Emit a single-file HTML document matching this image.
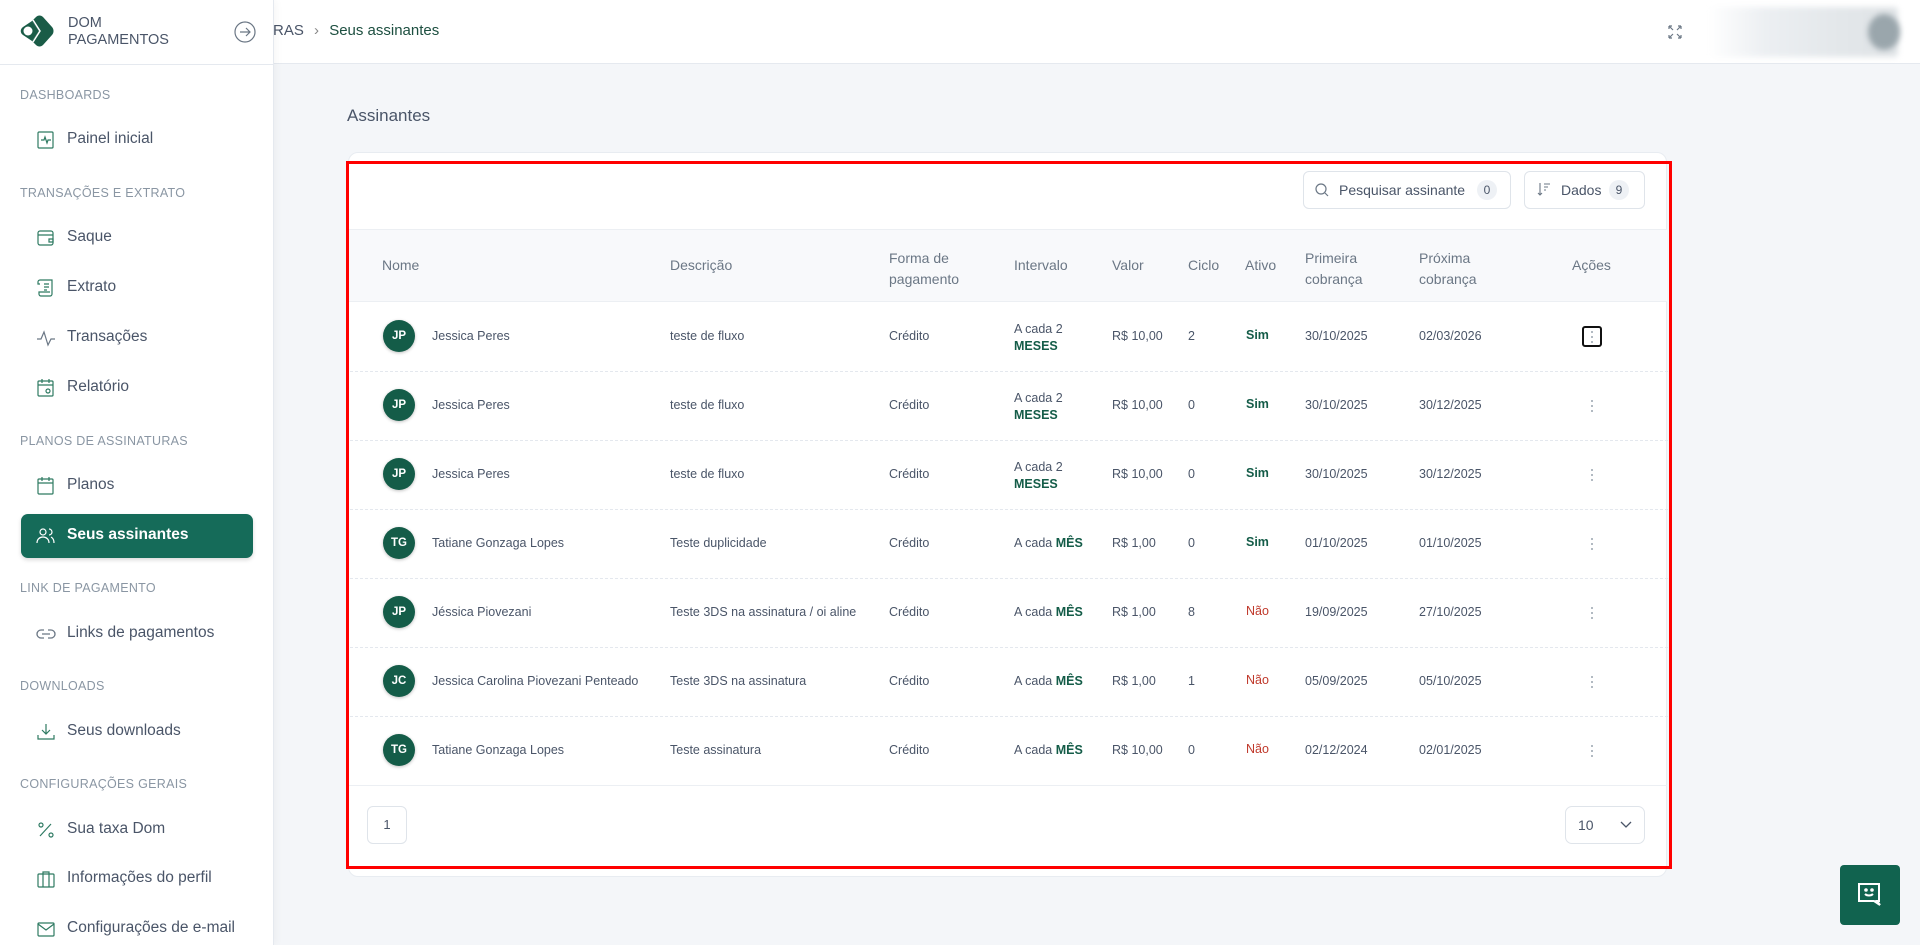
<!DOCTYPE html>
<html><head><meta charset="utf-8"><style>
*{box-sizing:border-box;margin:0;padding:0}
body{width:1920px;height:945px;overflow:hidden;background:#f4f6f9;font-family:"Liberation Sans",sans-serif;color:#4a5568;position:relative}
.a{position:absolute;white-space:nowrap}
.side{position:absolute;left:0;top:0;width:274px;height:945px;background:#fff;border-right:1px solid #e5e9ef;box-shadow:2px 0 8px rgba(0,0,0,.04)}
.sec{position:absolute;left:20px;font-size:12.5px;color:#8a96a3;letter-spacing:.3px}
.it{position:absolute;left:67px;font-size:15.5px;color:#4a5568}
.ic{position:absolute;left:36px;width:20px;height:20px}
.hd{font-size:14px;color:#6b7785}
.td{font-size:12.5px;color:#4a5568}
.av{position:absolute;width:32px;height:32px;border-radius:50%;background:#145c48;color:#fff;font-size:11.5px;font-weight:bold;text-align:center;line-height:32px;box-shadow:0 1px 3px rgba(0,0,0,.25)}
.g{color:#145c48;font-weight:bold}
.r{color:#c0392b}
.dash{position:absolute;left:350px;width:1318px;border-top:1px dashed #e4e8ee}
.dots{position:absolute;width:3px}
.dots i{display:block;width:2px;height:2px;background:#9aa4af;border-radius:50%;margin:3px 0}
</style></head><body>

<!-- header -->
<div class="a" style="left:274px;top:0;width:1646px;height:64px;background:#fff;border-bottom:1px solid #e5e9ef"></div>
<div class="a" style="left:273px;top:22px;font-size:15px;color:#4a5568">RAS <span style="margin:0 6px;color:#888">›</span> <span style="color:#1d4f40">Seus assinantes</span></div>
<svg class="a" style="left:1667px;top:24px" width="16" height="16" viewBox="0 0 16 16" fill="none" stroke="#6b7785" stroke-width="1.2"><path d="M2 2l4 4M2 2v3M2 2h3M14 2l-4 4M14 2v3M14 2h-3M2 14l4-4M2 14v-3M2 14h3M14 14l-4-4M14 14v-3M14 14h-3"/></svg>
<div class="a" style="left:1708px;top:7px;width:190px;height:50px;background:linear-gradient(90deg,#fff 0%,#eceff2 30%,#e3e7ea 70%,#dfe3e6 100%);border-radius:4px;filter:blur(3px)"></div>
<div class="a" style="left:1868px;top:14px;width:32px;height:36px;border-radius:50%;background:#9aa6ac;filter:blur(3px)"></div>

<!-- sidebar -->
<div class="side">
<svg class="a" style="left:20px;top:15px" width="34" height="32" viewBox="0 0 34 32"><path d="M16 2c2-2 5-2 7 0l9 10c2 2 2 6 0 8l-9 10c-2 2-5 2-7 0l-4-4 7-10-7-10z" fill="#1a5c47"/><path d="M12 6l7 10-7 10-9-6c-3-2-3-6 0-8z" fill="#1a5c47"/><circle cx="8" cy="16" r="4.5" fill="#fff"/><path d="M13 5l7 11-7 11" fill="none" stroke="#fff" stroke-width="1.5"/></svg>
<div class="a" style="left:68px;top:15px;font-size:14.5px;color:#4a5568;line-height:17px">DOM<br>PAGAMENTOS</div>
<svg class="a" style="left:234px;top:21px" width="22" height="22" viewBox="0 0 22 22" fill="none" stroke="#6b7785" stroke-width="1.2"><circle cx="11" cy="11" r="10"/><path d="M6 11h10M12 7l4 4-4 4"/></svg>
<div class="a" style="left:0;top:64px;width:274px;border-top:1px solid #e5e9ef"></div>

<div class="sec" style="top:88px">DASHBOARDS</div>
<svg class="ic" style="top:130px" viewBox="0 0 20 20" fill="none" stroke="#2e7a62" stroke-width="1.2"><rect x="2" y="2" width="15" height="16" rx="1"/><path d="M5 10h3l1-3 2 6 1-3h3"/></svg>
<div class="it" style="top:130px">Painel inicial</div>

<div class="sec" style="top:186px">TRANSAÇÕES E EXTRATO</div>
<svg class="ic" style="top:228px" viewBox="0 0 20 20" fill="none" stroke="#2e7a62" stroke-width="1.2"><rect x="2" y="3" width="15" height="14" rx="2"/><path d="M2 7h15M13 11h4v3h-4z"/></svg>
<div class="it" style="top:228px">Saque</div>
<svg class="ic" style="top:278px" viewBox="0 0 20 20" fill="none" stroke="#2e7a62" stroke-width="1.2"><path d="M4 2h12v14a2 2 0 01-2 2H5a2 2 0 01-2-2v-2h11M4 2a2 2 0 00-2 2v2h2M8 6h5M8 9h5M8 12h3"/></svg>
<div class="it" style="top:278px">Extrato</div>
<svg class="ic" style="top:328px" viewBox="0 0 20 20" fill="none" stroke="#6b7785" stroke-width="1.2"><path d="M1 11h4l3-7 4 13 3-6h4"/></svg>
<div class="it" style="top:328px">Transações</div>
<svg class="ic" style="top:378px" viewBox="0 0 20 20" fill="none" stroke="#2e7a62" stroke-width="1.2"><rect x="2" y="3" width="15" height="15" rx="1"/><path d="M2 7h15M6 1v4M13 1v4"/><circle cx="12" cy="13" r="2"/></svg>
<div class="it" style="top:378px">Relatório</div>

<div class="sec" style="top:434px">PLANOS DE ASSINATURAS</div>
<svg class="ic" style="top:476px" viewBox="0 0 20 20" fill="none" stroke="#2e7a62" stroke-width="1.2"><rect x="2" y="3" width="15" height="15" rx="1"/><path d="M2 7h15M6 1v4M13 1v4"/></svg>
<div class="it" style="top:476px">Planos</div>
<div class="a" style="left:21px;top:514px;width:232px;height:44px;background:#156b59;border-radius:7px;box-shadow:0 2px 4px rgba(0,0,0,.15)"></div>
<svg class="ic" style="top:526px" viewBox="0 0 20 20" fill="none" stroke="#fff" stroke-width="1.2"><circle cx="7" cy="6" r="3"/><path d="M1 17c0-4 3-6 6-6s6 2 6 6M13 3a3 3 0 010 6M15 11c2 1 3 3 3 6"/></svg>
<div class="it" style="top:526px;color:#fff;font-weight:bold">Seus assinantes</div>

<div class="sec" style="top:581px">LINK DE PAGAMENTO</div>
<svg class="ic" style="top:624px" viewBox="0 0 20 20" fill="none" stroke="#6b7785" stroke-width="1.3"><path d="M8 6H5a4 4 0 000 8h3M12 6h3a4 4 0 010 8h-3M6 10h8"/></svg>
<div class="it" style="top:624px">Links de pagamentos</div>

<div class="sec" style="top:679px">DOWNLOADS</div>
<svg class="ic" style="top:722px" viewBox="0 0 20 20" fill="none" stroke="#2e7a62" stroke-width="1.2"><path d="M10 2v10M6 8l4 4 4-4M2 13v4h16v-4"/></svg>
<div class="it" style="top:722px">Seus downloads</div>

<div class="sec" style="top:777px">CONFIGURAÇÕES GERAIS</div>
<svg class="ic" style="top:820px" viewBox="0 0 20 20" fill="none" stroke="#2e7a62" stroke-width="1.2"><path d="M15 4L4 16"/><circle cx="5" cy="5" r="2"/><circle cx="15" cy="15" r="2"/></svg>
<div class="it" style="top:820px">Sua taxa Dom</div>
<svg class="ic" style="top:869px" viewBox="0 0 20 20" fill="none" stroke="#2e7a62" stroke-width="1.2"><rect x="2" y="5" width="16" height="13" rx="1"/><path d="M7 5V3h6v2M7 5v13M13 5v13"/></svg>
<div class="it" style="top:869px">Informações do perfil</div>
<svg class="ic" style="top:919px" viewBox="0 0 20 20" fill="none" stroke="#2e7a62" stroke-width="1.2"><rect x="2" y="4" width="16" height="13" rx="1"/><path d="M2 5l8 6 8-6"/></svg>
<div class="it" style="top:919px">Configurações de e-mail</div>
</div>

<!-- content -->
<div class="a" style="left:347px;top:106px;font-size:17px;color:#4a5568">Assinantes</div>
<div class="a" style="left:348px;top:152px;width:1319px;height:725px;background:#fff;border-radius:10px;border:1px solid #e8ecf1"></div>

<!-- toolbar -->
<div class="a" style="left:1303px;top:171px;width:208px;height:38px;border:1px solid #dfe4ea;border-radius:6px"></div>
<svg class="a" style="left:1315px;top:183px" width="14" height="14" viewBox="0 0 14 14" fill="none" stroke="#6b7785" stroke-width="1.2"><circle cx="6" cy="6" r="5"/><path d="M10 10l3 3"/></svg>
<div class="a" style="left:1339px;top:182px;font-size:14px;color:#4a5568">Pesquisar assinante</div>
<div class="a" style="left:1477px;top:180px;width:20px;height:20px;border-radius:50%;background:#eef1f5;font-size:12px;text-align:center;line-height:20px">0</div>
<div class="a" style="left:1524px;top:171px;width:121px;height:38px;border:1px solid #dfe4ea;border-radius:6px"></div>
<svg class="a" style="left:1537px;top:182px" width="14" height="14" viewBox="0 0 14 14" fill="none" stroke="#6b7785" stroke-width="1.1"><path d="M3 1v12M1 11l2 2 2-2M7 2h6M7 5h4M7 8h2"/></svg>
<div class="a" style="left:1561px;top:182px;font-size:14px;color:#4a5568">Dados</div>
<div class="a" style="left:1609px;top:180px;width:20px;height:20px;border-radius:50%;background:#eef1f5;font-size:12px;text-align:center;line-height:20px">9</div>

<!-- table header -->
<div class="a" style="left:349px;top:229px;width:1318px;height:73px;background:#f8f9fb;border-top:1px solid #eceff3;border-bottom:1px solid #eceff3"></div>
<div class="a hd" style="left:382px;top:257px">Nome</div>
<div class="a hd" style="left:670px;top:257px">Descrição</div>
<div class="a hd" style="left:889px;top:248px;line-height:21px">Forma de<br>pagamento</div>
<div class="a hd" style="left:1014px;top:257px">Intervalo</div>
<div class="a hd" style="left:1112px;top:257px">Valor</div>
<div class="a hd" style="left:1188px;top:257px">Ciclo</div>
<div class="a hd" style="left:1245px;top:257px">Ativo</div>
<div class="a hd" style="left:1305px;top:248px;line-height:21px">Primeira<br>cobrança</div>
<div class="a hd" style="left:1419px;top:248px;line-height:21px">Próxima<br>cobrança</div>
<div class="a hd" style="left:1572px;top:257px">Ações</div>

<!-- row 1 -->
<div class="av" style="left:383px;top:320px">JP</div><div class="a td" style="left:432px;top:329px">Jessica Peres</div><div class="a td" style="left:670px;top:329px">teste de fluxo</div><div class="a td" style="left:889px;top:329px">Crédito</div><div class="a td" style="left:1014px;top:321px;line-height:17px">A cada 2<br><span class="g">MESES</span></div><div class="a td" style="left:1112px;top:329px">R$ 10,00</div><div class="a td" style="left:1188px;top:329px">2</div><div class="a td g" style="left:1246px;top:328px">Sim</div><div class="a td" style="left:1305px;top:329px">30/10/2025</div><div class="a td" style="left:1419px;top:329px">02/03/2026</div>
<div class="a" style="left:1582px;top:326px;width:20px;height:21px;border:2px solid #111;border-radius:3px"></div><div class="dots a" style="left:1591px;top:328px"><i></i><i></i><i></i></div>
<div class="dash" style="top:371px"></div>
<!-- row 2 -->
<div class="av" style="left:383px;top:389px">JP</div><div class="a td" style="left:432px;top:398px">Jessica Peres</div><div class="a td" style="left:670px;top:398px">teste de fluxo</div><div class="a td" style="left:889px;top:398px">Crédito</div><div class="a td" style="left:1014px;top:390px;line-height:17px">A cada 2<br><span class="g">MESES</span></div><div class="a td" style="left:1112px;top:398px">R$ 10,00</div><div class="a td" style="left:1188px;top:398px">0</div><div class="a td g" style="left:1246px;top:397px">Sim</div><div class="a td" style="left:1305px;top:398px">30/10/2025</div><div class="a td" style="left:1419px;top:398px">30/12/2025</div>
<div class="dots a" style="left:1591px;top:397px"><i></i><i></i><i></i></div>
<div class="dash" style="top:440px"></div>
<!-- row 3 -->
<div class="av" style="left:383px;top:458px">JP</div><div class="a td" style="left:432px;top:467px">Jessica Peres</div><div class="a td" style="left:670px;top:467px">teste de fluxo</div><div class="a td" style="left:889px;top:467px">Crédito</div><div class="a td" style="left:1014px;top:459px;line-height:17px">A cada 2<br><span class="g">MESES</span></div><div class="a td" style="left:1112px;top:467px">R$ 10,00</div><div class="a td" style="left:1188px;top:467px">0</div><div class="a td g" style="left:1246px;top:466px">Sim</div><div class="a td" style="left:1305px;top:467px">30/10/2025</div><div class="a td" style="left:1419px;top:467px">30/12/2025</div>
<div class="dots a" style="left:1591px;top:466px"><i></i><i></i><i></i></div>
<div class="dash" style="top:509px"></div>
<!-- row 4 -->
<div class="av" style="left:383px;top:527px">TG</div><div class="a td" style="left:432px;top:536px">Tatiane Gonzaga Lopes</div><div class="a td" style="left:670px;top:536px">Teste duplicidade</div><div class="a td" style="left:889px;top:536px">Crédito</div><div class="a td" style="left:1014px;top:536px">A cada <span class="g">MÊS</span></div><div class="a td" style="left:1112px;top:536px">R$ 1,00</div><div class="a td" style="left:1188px;top:536px">0</div><div class="a td g" style="left:1246px;top:535px">Sim</div><div class="a td" style="left:1305px;top:536px">01/10/2025</div><div class="a td" style="left:1419px;top:536px">01/10/2025</div>
<div class="dots a" style="left:1591px;top:535px"><i></i><i></i><i></i></div>
<div class="dash" style="top:578px"></div>
<!-- row 5 -->
<div class="av" style="left:383px;top:596px">JP</div><div class="a td" style="left:432px;top:605px">Jéssica Piovezani</div><div class="a td" style="left:670px;top:605px">Teste 3DS na assinatura / oi aline</div><div class="a td" style="left:889px;top:605px">Crédito</div><div class="a td" style="left:1014px;top:605px">A cada <span class="g">MÊS</span></div><div class="a td" style="left:1112px;top:605px">R$ 1,00</div><div class="a td" style="left:1188px;top:605px">8</div><div class="a td r" style="left:1246px;top:604px">Não</div><div class="a td" style="left:1305px;top:605px">19/09/2025</div><div class="a td" style="left:1419px;top:605px">27/10/2025</div>
<div class="dots a" style="left:1591px;top:604px"><i></i><i></i><i></i></div>
<div class="dash" style="top:647px"></div>
<!-- row 6 -->
<div class="av" style="left:383px;top:665px">JC</div><div class="a td" style="left:432px;top:674px">Jessica Carolina Piovezani Penteado</div><div class="a td" style="left:670px;top:674px">Teste 3DS na assinatura</div><div class="a td" style="left:889px;top:674px">Crédito</div><div class="a td" style="left:1014px;top:674px">A cada <span class="g">MÊS</span></div><div class="a td" style="left:1112px;top:674px">R$ 1,00</div><div class="a td" style="left:1188px;top:674px">1</div><div class="a td r" style="left:1246px;top:673px">Não</div><div class="a td" style="left:1305px;top:674px">05/09/2025</div><div class="a td" style="left:1419px;top:674px">05/10/2025</div>
<div class="dots a" style="left:1591px;top:673px"><i></i><i></i><i></i></div>
<div class="dash" style="top:716px"></div>
<!-- row 7 -->
<div class="av" style="left:383px;top:734px">TG</div><div class="a td" style="left:432px;top:743px">Tatiane Gonzaga Lopes</div><div class="a td" style="left:670px;top:743px">Teste assinatura</div><div class="a td" style="left:889px;top:743px">Crédito</div><div class="a td" style="left:1014px;top:743px">A cada <span class="g">MÊS</span></div><div class="a td" style="left:1112px;top:743px">R$ 10,00</div><div class="a td" style="left:1188px;top:743px">0</div><div class="a td r" style="left:1246px;top:742px">Não</div><div class="a td" style="left:1305px;top:743px">02/12/2024</div><div class="a td" style="left:1419px;top:743px">02/01/2025</div>
<div class="dots a" style="left:1591px;top:742px"><i></i><i></i><i></i></div>
<div class="a" style="left:349px;top:785px;width:1318px;border-top:1px solid #eceff3"></div>

<!-- pagination -->
<div class="a" style="left:367px;top:806px;width:40px;height:38px;border:1px solid #dfe4ea;border-radius:6px;text-align:center;line-height:36px;font-size:13px">1</div>
<div class="a" style="left:1565px;top:806px;width:80px;height:38px;border:1px solid #dfe4ea;border-radius:7px"></div>
<div class="a" style="left:1578px;top:817px;font-size:14px;color:#4a5568">10</div>
<svg class="a" style="left:1619px;top:820px" width="14" height="10" viewBox="0 0 14 10" fill="none" stroke="#4a5568" stroke-width="1.3"><path d="M2 2l5 5 5-5"/></svg>

<!-- red box -->
<div class="a" style="left:346px;top:161px;width:1326px;height:708px;border:3px solid #ff0000"></div>

<!-- chat -->
<div class="a" style="left:1840px;top:865px;width:60px;height:60px;background:#11634f;border-radius:4px"></div>
<svg class="a" style="left:1857px;top:882px" width="26" height="26" viewBox="0 0 26 26" fill="none" stroke="#fff" stroke-width="2"><path d="M2 2h20v17h-2l3 4-6-4H2z"/><path d="M8 12c2 2 6 2 8 0"/><circle cx="9" cy="8" r=".8" fill="#fff"/><circle cx="15" cy="8" r=".8" fill="#fff"/></svg>
</body></html>
